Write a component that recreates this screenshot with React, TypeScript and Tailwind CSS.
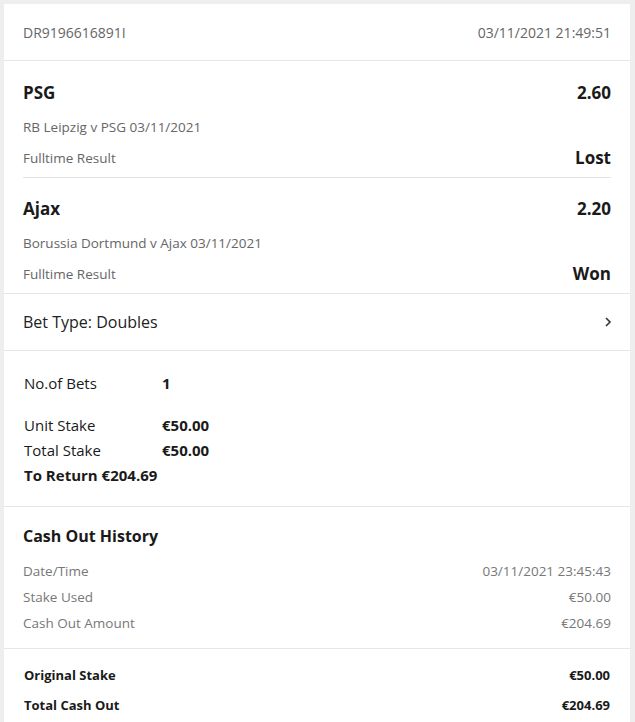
import React from 'react'

const selections = [
  { name: 'PSG', odds: '2.60', event: 'RB Leipzig v PSG 03/11/2021', market: 'Fulltime Result', result: 'Lost' },
  { name: 'Ajax', odds: '2.20', event: 'Borussia Dortmund v Ajax 03/11/2021', market: 'Fulltime Result', result: 'Won' },
]

export default function App() {
  return (
    <div
      className="min-h-screen bg-[#eeeeee] pl-[4px] pr-[5px] pt-[4px] text-[#1a1a1a]"
      style={{ fontFamily: '"Open Sans", "Liberation Sans", sans-serif' }}
    >
      <div className="bg-white">
        {/* Header */}
        <div className="flex h-[57px] items-center justify-between border-b border-[#e6e6e6] px-[19px] text-[14px] text-[#666]">
          <span>DR9196616891I</span>
          <span>03/11/2021 21:49:51</span>
        </div>

        {/* Selections */}
        <div className="border-b border-[#e6e6e6] px-[19px]">
          {selections.map((s, i) => (
            <div
              key={s.name}
              className={
                i === 0
                  ? 'border-b border-[#e3e3e3] pb-[9px] pt-[20px]'
                  : 'pb-[9px] pt-[19px]'
              }
            >
              <div className="flex h-[24px] items-center justify-between text-[17px] font-bold">
                <span>{s.name}</span>
                <span>{s.odds}</span>
              </div>
              <div className="mt-[12px] flex h-[20px] items-center text-[13.5px] text-[#666]">
                {s.event}
              </div>
              <div className="mt-[11px] flex h-[20px] items-center justify-between">
                <span className="text-[13.5px] text-[#666]">{s.market}</span>
                <span className="text-[17px] font-bold">{s.result}</span>
              </div>
            </div>
          ))}
        </div>

        {/* Bet type */}
        <div className="flex h-[57px] items-center justify-between border-b border-[#e6e6e6] px-[19px] text-[16px] text-[#222]">
          <span>Bet Type: Doubles</span>
          <svg width="8" height="12" viewBox="0 0 8 12" className="mr-[-1px]">
            <path d="M2 2l4 4-4 4" fill="none" stroke="#333" strokeWidth="1.6" />
          </svg>
        </div>

        {/* Stake summary */}
        <div className="border-b border-[#e6e6e6] px-[20px] pb-[18px] pt-[20px] text-[15px]">
          <div className="flex h-[25px] items-center">
            <span className="w-[138px]">No.of Bets</span>
            <span className="font-bold">1</span>
          </div>
          <div className="mt-[17px] flex h-[25px] items-center">
            <span className="w-[138px]">Unit Stake</span>
            <span className="font-bold">€50.00</span>
          </div>
          <div className="flex h-[25px] items-center">
            <span className="w-[138px]">Total Stake</span>
            <span className="font-bold">€50.00</span>
          </div>
          <div className="flex h-[25px] items-center font-bold">To Return €204.69</div>
        </div>

        {/* Cash out history */}
        <div className="border-b border-[#e6e6e6] px-[19px] pb-[12px] pt-[17px]">
          <div className="flex h-[24px] items-center text-[16px] font-bold">Cash Out History</div>
          <div className="mt-[10px] text-[13.5px] text-[#777]">
            <div className="flex h-[26px] items-center justify-between">
              <span>Date/Time</span>
              <span>03/11/2021 23:45:43</span>
            </div>
            <div className="flex h-[26px] items-center justify-between">
              <span>Stake Used</span>
              <span>€50.00</span>
            </div>
            <div className="flex h-[26px] items-center justify-between">
              <span>Cash Out Amount</span>
              <span>€204.69</span>
            </div>
          </div>
        </div>

        {/* Totals */}
        <div className="px-[20px] pb-[6px] pt-[12px] text-[13px] font-bold">
          <div className="flex h-[30px] items-center justify-between">
            <span>Original Stake</span>
            <span>€50.00</span>
          </div>
          <div className="flex h-[30px] items-center justify-between">
            <span>Total Cash Out</span>
            <span>€204.69</span>
          </div>
        </div>
      </div>
    </div>
  )
}
